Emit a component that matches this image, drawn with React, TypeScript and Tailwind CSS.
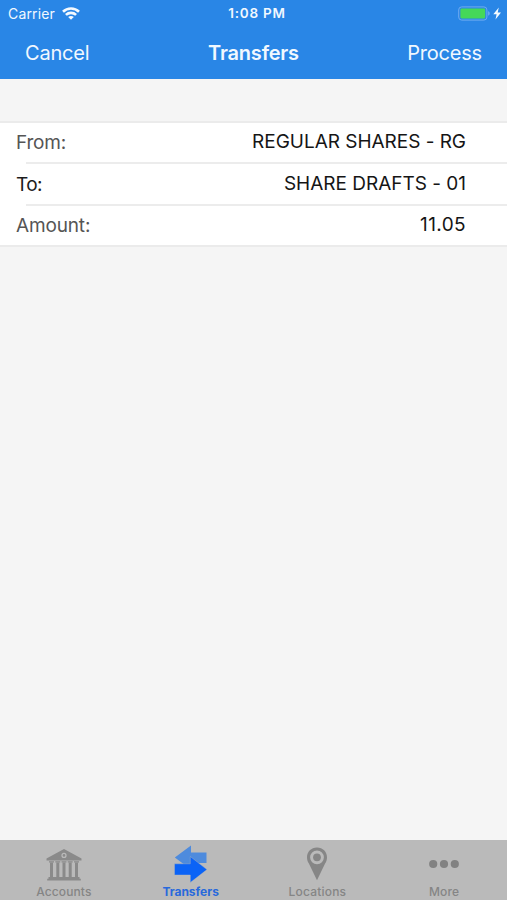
import type { ReactNode } from "react"

interface TransferRow {
  label: string
  value: string
  labelClass: string
  valueClass: string
}

interface Tab {
  label: string
  labelClass: string
  icon: ReactNode
}

const rows: TransferRow[] = [
  { label: "From:", value: "REGULAR SHARES - RG", labelClass: "text-[#555555] tracking-[-0.2px]", valueClass: "tracking-[-0.03px]" },
  { label: "To:", value: "SHARE DRAFTS - 01", labelClass: "text-[#1c1c1c] tracking-[-0.6px]", valueClass: "tracking-[-0.01px]" },
  { label: "Amount:", value: "11.05", labelClass: "text-[#555555] tracking-[-0.15px]", valueClass: "tracking-[0.4px]" },
]

const BankIcon = () => (
  <svg width="36" height="34" viewBox="0 0 36 34" fill="#8a8a8a">
    <path fillRule="evenodd" d="M18 1 35.5 10.5V12.5H.5V10.5ZM18 4.8a2.6 2.6 0 1 0 0 5.2a2.6 2.6 0 0 0 0-5.2Z" />
    <circle cx="18" cy="7.4" r="1.3" />
    <path d="M3 13.3h5v1.3H3ZM9.3 13.3h5v1.3h-5ZM15.5 13.3h5v1.3h-5ZM21.7 13.3h5v1.3h-5ZM28 13.3h5v1.3h-5Z" />
    <path d="M4 14.6h3V29H4ZM10.3 14.6h3V29h-3ZM16.5 14.6h3V29h-3ZM22.7 14.6h3V29h-3ZM29 14.6h3V29h-3Z" />
    <path d="M2.5 29h31v1.8h1.3v1.8H1.2v-1.8h1.3Z" />
  </svg>
)

const TransferIcon = () => (
  <svg width="34" height="38" viewBox="0 0 34 38">
    <path fill="#4e8bdd" d="M.8 12.5 17 .5V7.5H32.5V18H17V24.5Z" />
    <path fill="#0b63f6" stroke="#bababa" strokeWidth=".4" d="M.5 18.8H16.3V11.5L33 24.6 16.3 37.5V30H.5Z" />
  </svg>
)

const PinIcon = () => (
  <svg width="22" height="34" viewBox="0 0 22 34" fill="#868686">
    <path fillRule="evenodd" d="M11 .5C5.2.5 1 4.8 1 10.4c0 2.2.7 4.2 1.9 6.2L11 33.3l8.1-16.7c1.2-2 1.9-4 1.9-6.2C21 4.8 16.8.5 11 .5Zm0 2.900a6.900 6.900 0 1 1 0 13.800a6.900 6.900 0 0 1 0-13.800Z" />
    <circle cx="11" cy="10.3" r="3.9" />
  </svg>
)

const MoreIcon = () => (
  <svg width="30" height="10" viewBox="0 0 30 10" fill="#828282">
    <circle cx="4.2" cy="5" r="4.1" />
    <circle cx="15" cy="5" r="4.1" />
    <circle cx="25.8" cy="5" r="4.1" />
  </svg>
)

const tabs: Tab[] = [
  { label: "Accounts", labelClass: "font-medium text-[#858585] tracking-[0.1px]", icon: <span className="pt-[2px]"><BankIcon /></span> },
  { label: "Transfers", labelClass: "font-bold text-[#2869dc] tracking-[0px]", icon: <TransferIcon /> },
  { label: "Locations", labelClass: "font-medium text-[#858585] tracking-[0.2px]", icon: <PinIcon /> },
  { label: "More", labelClass: "font-medium text-[#858585] tracking-[0.2px]", icon: <MoreIcon /> },
]

const WifiIcon = () => (
  <svg width="18" height="13" viewBox="0 0 18 13" fill="none" stroke="#f4faff" strokeWidth="2.6">
    <path d="M1 4.7C5.4.4 12.6.4 17 4.7" />
    <path d="M3.9 7.9c2.9-2.7 7.3-2.7 10.2 0" />
    <path fill="#f4faff" stroke="none" d="m9 12.8 2.8-2.7c-1.5-1.4-4.1-1.4-5.6 0Z" />
  </svg>
)

const BatteryIcon = () => (
  <svg width="44" height="15" viewBox="0 0 44 15">
    <rect x="0.7" y="0.9" width="28.2" height="13.2" rx="3" fill="none" stroke="#6fabf0" strokeWidth="1" />
    <rect x="2.4" y="2.6" width="24.8" height="9.8" rx="1.3" fill="#45d858" />
    <path d="M30.3 5.3c1.7.5 1.7 3.9 0 4.400Z" fill="#82b8f5" />
    <path d="M40.8 1.5 35.3 8.2H38.600L37.500 13.500 43 6.500H39.700Z" fill="#f4faff" />
  </svg>
)

export default function App() {
  return (
    <div className="flex h-[900px] w-[507px] flex-col overflow-hidden bg-[#f5f5f5] font-['Inter','Liberation_Sans',sans-serif]">
      <header className="h-[79px] shrink-0 bg-[#2986e6] text-[#f1f8ff]">
        {/* Status bar */}
        <div className="grid h-[27px] grid-cols-3 items-center pl-[8px] pr-[5px]">
          <div className="flex items-center gap-[7px] text-[14px]">
            <span className="tracking-[0.15px]">Carrier</span>
            <WifiIcon />
          </div>
          <span className="pl-[4px] text-center text-[13.5px] font-semibold tracking-[0.8px]">1:08 PM</span>
          <div className="flex justify-end">
            <BatteryIcon />
          </div>
        </div>
        {/* Navigation bar */}
        <div className="grid h-[51px] grid-cols-3 items-center pl-[25px] pr-[25px] text-[20px]">
          <button className="text-left tracking-[-0.2px]">Cancel</button>
          <h1 className="text-center font-semibold tracking-[-0.2px]">Transfers</h1>
          <button className="text-right tracking-[-0.2px]">Process</button>
        </div>
      </header>

      <main className="flex-1 pt-[42px]">
        <section className="border-y-2 border-[#ebebeb] bg-white">
          {rows.map((row, i) => (
            <div key={row.label}>
              {i > 0 && <div className="ml-[26px] h-[2px] bg-[#ececec]" />}
              <div className="flex h-[39.33px] items-center justify-between pt-[2px] pl-[16px] pr-[41px] text-[19px]">
                <span className={row.labelClass}>{row.label}</span>
                <span className={`pb-[2px] text-[#151515] ${row.valueClass}`}>{row.value}</span>
              </div>
            </div>
          ))}
        </section>
      </main>

      <nav className="grid h-[60px] shrink-0 grid-cols-4 bg-[#bababa]">
        {tabs.map((tab) => (
          <button key={tab.label} className="flex flex-col items-center pl-px">
            <span className="flex h-[45px] items-center pt-[3px]">{tab.icon}</span>
            <span className={`text-[12px] leading-[14px] ${tab.labelClass}`}>{tab.label}</span>
          </button>
        ))}
      </nav>
    </div>
  )
}
